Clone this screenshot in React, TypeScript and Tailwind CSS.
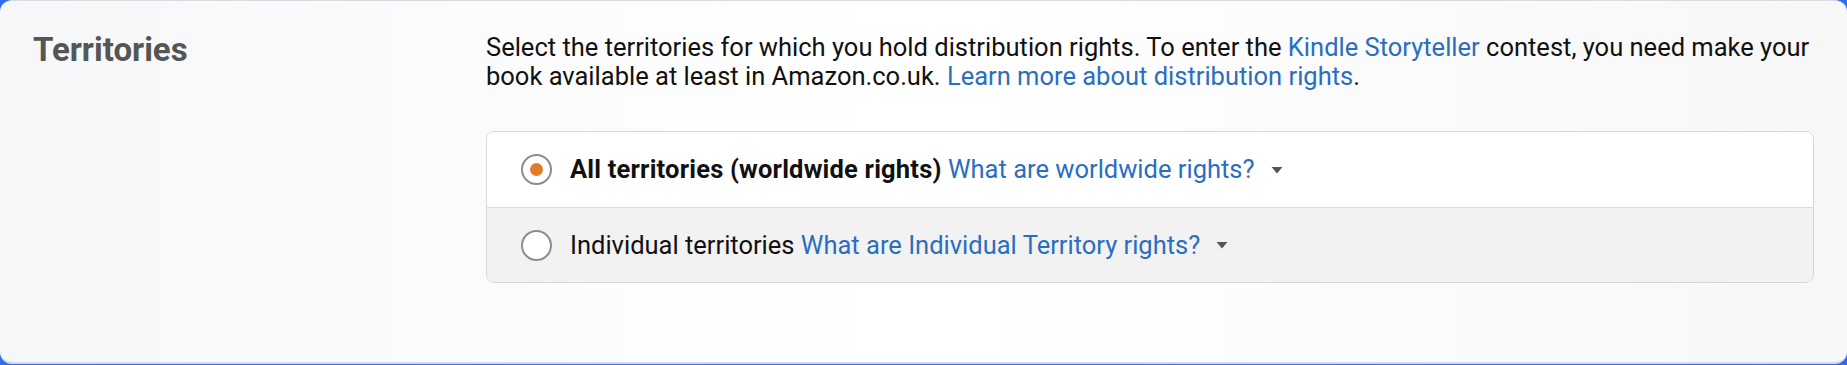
function Caret() {
  return (
    <svg width="12" height="8" viewBox="0 0 12 8" className="ml-[16px] shrink-0">
      <path d="M0.5 1h11L6 7.5z" fill="#555" />
    </svg>
  );
}

interface OptionRowProps {
  label: string;
  link: string;
  checked?: boolean;
  last?: boolean;
}

function OptionRow({ label, link, checked, last }: OptionRowProps) {
  return (
    <label
      className={
        'flex h-[75px] items-center pl-[34px] ' +
        (last ? 'bg-[#f2f2f2] border-t border-[#dcdcdc]' : 'bg-white')
      }
    >
      <span className="flex h-[31px] w-[31px] shrink-0 items-center justify-center rounded-full border-2 border-[#8d8d8d] bg-white">
        {checked && <span className="h-[13px] w-[13px] rounded-full bg-[#e17b26]" />}
      </span>
      <span className="ml-[18px] text-[25.5px] text-[#111]">
        <span className={checked ? 'font-bold tracking-[0.2px]' : ''}>{label}</span>{' '}
        <a className="text-[#2a6ebf]">{link}</a>
      </span>
      <Caret />
    </label>
  );
}

export default function App() {
  return (
    <div className="h-[365px] w-[1847px] bg-[#2f6cf0]" style={{ fontFamily: 'Roboto, Lato, sans-serif' }}>
      <div className="grid h-[364px] grid-cols-[453px_1fr] rounded-[12px] border-t border-b-2 border-[#d9dbe0] bg-gradient-to-r from-[#f6f7f8] via-white to-[#f7f7f8] px-[33px] pt-[29px]">
        <h2 className="text-[33px] font-bold leading-[40px] text-[#555]">Territories</h2>

        <div className="pt-[3px]">
          <p className="whitespace-nowrap text-[25.5px] leading-[29px] text-[#111]">
            Select the territories for which you hold distribution rights. To enter the{' '}
            <a className="text-[#2a6ebf]">Kindle Storyteller</a> contest, you need make your
            <br />
            book available at least in Amazon.co.uk.{' '}
            <a className="text-[#2a6ebf]">Learn more about distribution rights</a>.
          </p>

          <div className="mt-[40px] overflow-hidden rounded-[8px] border border-[#d5d7da]">
            <OptionRow label="All territories (worldwide rights)" link="What are worldwide rights?" checked />
            <OptionRow label="Individual territories" link="What are Individual Territory rights?" last />
          </div>
        </div>
      </div>
    </div>
  );
}
